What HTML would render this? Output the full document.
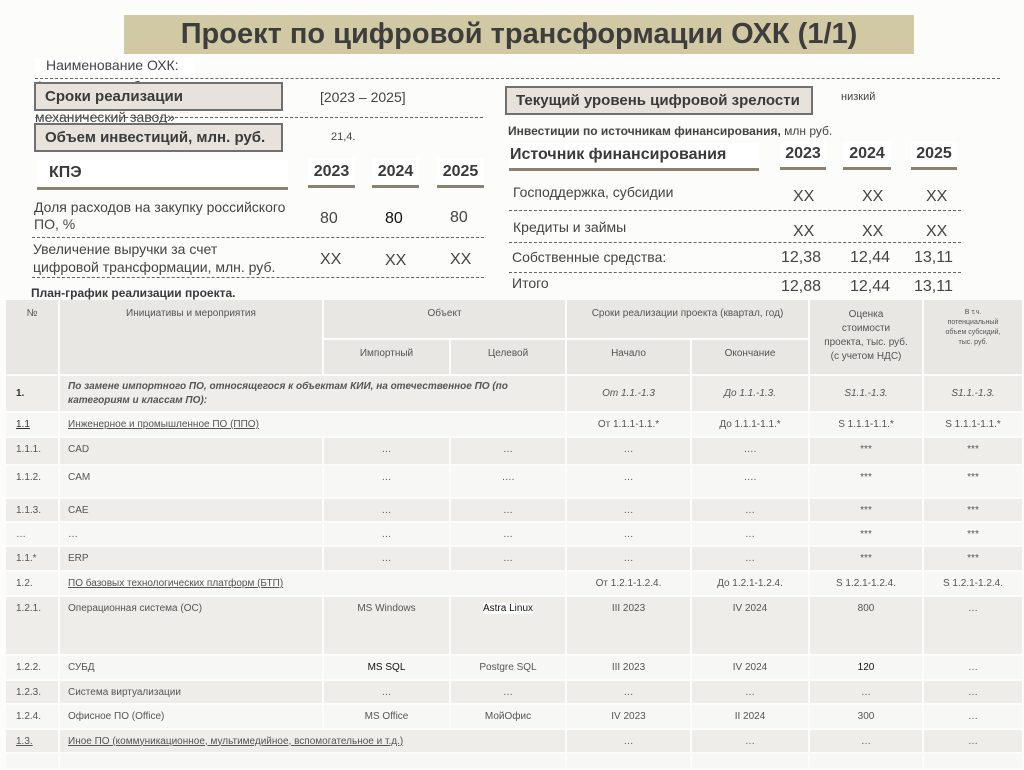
<!DOCTYPE html>
<html><head><meta charset="utf-8">
<style>
*{margin:0;padding:0;box-sizing:border-box}
body{width:1024px;height:767px;background:#fcfcfb;position:relative;overflow:hidden;font-family:"Liberation Sans","DejaVu Sans",sans-serif;color:#444}
.a{position:absolute;white-space:nowrap}
.title{left:124px;top:15px;width:790px;height:39px;background:#d1c9a4;font-weight:bold;font-size:29px;color:#3d3d3d;text-align:center;line-height:39px}
.box{background:#e7e3dc;border:2px solid #707070;font-weight:bold;font-size:15px;color:#3a3a3a;padding-left:9px}
.dash{border-top:1px dashed #666;height:0}
.hd{font-weight:bold;font-size:16px;color:#3a3a3a;border-bottom:3px solid #8a8170;text-align:center;background:#fff}
.t{font-size:14px;color:#444}
.v{font-size:16px;color:#444}
table{position:absolute;left:4px;top:298px;border-collapse:separate;border-spacing:2px;font-family:"Liberation Sans Narrow","Liberation Sans",sans-serif;font-size:10px;color:#555;table-layout:fixed}
td{vertical-align:middle;text-align:center;padding:0 2px;overflow:hidden;white-space:nowrap}
td.l{text-align:left;padding-left:8px}
td.n{text-align:left;padding-left:10px}
tr.h td{background:#e8e7e3;vertical-align:top;padding-top:8px}
tr.g td{background:#eeede9}
tr.w td{background:#f7f7f5}
.u{text-decoration:underline}
.tp td{vertical-align:top;padding-top:6px}
</style></head><body>
<div class="a title">Проект по цифровой трансформации ОХК (1/1)</div>

<div class="a" style="left:35px;top:58px;width:160px;height:16px;background:#fff"></div>
<div class="a" style="left:46px;top:57px;font-size:14px;color:#444">Наименование ОХК:</div>
<div class="a dash" style="left:35px;top:78px;width:965px"></div>
<div class="a" style="left:35px;top:78px;font-size:14px;color:#444;height:6px;overflow:hidden">Акционерное общество</div>
<div class="a" style="left:35px;top:109px;font-size:14px;color:#444">механический завод»</div>
<div class="a dash" style="left:35px;top:117px;width:448px"></div>
<div class="a box" style="left:34px;top:82px;width:249px;height:29px;line-height:25px">Сроки реализации</div>
<div class="a" style="left:320px;top:89px;font-size:14px;color:#444">[2023 – 2025]</div>
<div class="a box" style="left:34px;top:123px;width:249px;height:29px;line-height:25px">Объем инвестиций, млн. руб.</div>
<div class="a" style="left:331px;top:131px;font-size:11px;color:#444">21,4.</div>

<div class="a hd" style="left:37px;top:160px;width:251px;height:30px;line-height:26px;text-align:left;padding-left:12px">КПЭ</div>
<div class="a hd" style="left:308px;top:158px;width:47px;height:30px;line-height:28px">2023</div>
<div class="a hd" style="left:372px;top:158px;width:47px;height:30px;line-height:28px">2024</div>
<div class="a hd" style="left:437px;top:158px;width:47px;height:30px;line-height:28px">2025</div>

<div class="a t" style="left:34px;top:199px;line-height:17px">Доля расходов на закупку российского<br>ПО, %</div>
<div class="a v" style="left:320px;top:210px">80</div>
<div class="a v" style="left:385px;top:210px;color:#111">80</div>
<div class="a v" style="left:450px;top:209px">80</div>
<div class="a dash" style="left:32px;top:237px;width:452px"></div>
<div class="a t" style="left:33px;top:240px;line-height:18px">Увеличение выручки за счет<br>цифровой трансформации, млн. руб.</div>
<div class="a v" style="left:320px;top:251px">XX</div>
<div class="a v" style="left:385px;top:252px">XX</div>
<div class="a v" style="left:450px;top:251px">XX</div>
<div class="a dash" style="left:32px;top:277px;width:452px"></div>
<div class="a" style="left:31px;top:286px;font-size:12px;font-weight:bold;color:#3a3a3a">План-график реализации проекта.</div>

<div class="a box" style="left:505px;top:86px;width:308px;height:29px;line-height:25px">Текущий уровень цифровой зрелости</div>
<div class="a" style="left:841px;top:91px;font-size:11px;color:#444">низкий</div>
<div class="a" style="left:508px;top:124px;font-size:12px;color:#444"><b>Инвестиции по источникам финансирования,</b> млн руб.</div>
<div class="a hd" style="left:509px;top:143px;width:250px;height:28px;line-height:24px;text-align:left;padding-left:1px">Источник финансирования</div>
<div class="a hd" style="left:780px;top:141px;width:46px;height:29px;line-height:26px">2023</div>
<div class="a hd" style="left:843px;top:141px;width:48px;height:29px;line-height:26px">2024</div>
<div class="a hd" style="left:911px;top:141px;width:46px;height:29px;line-height:26px">2025</div>
<div class="a t" style="left:513px;top:184px">Господдержка, субсидии</div>
<div class="a v" style="left:793px;top:188px">XX</div><div class="a v" style="left:862px;top:188px">XX</div><div class="a v" style="left:926px;top:188px">XX</div>
<div class="a dash" style="left:509px;top:210px;width:452px"></div>
<div class="a t" style="left:513px;top:219px">Кредиты и займы</div>
<div class="a v" style="left:793px;top:223px">XX</div><div class="a v" style="left:862px;top:223px">XX</div><div class="a v" style="left:926px;top:223px">XX</div>
<div class="a dash" style="left:509px;top:242px;width:452px"></div>
<div class="a t" style="left:512px;top:249px">Собственные средства:</div>
<div class="a v" style="left:781px;top:249px">12,38</div><div class="a v" style="left:850px;top:249px">12,44</div><div class="a v" style="left:914px;top:249px">13,11</div>
<div class="a dash" style="left:509px;top:272px;width:452px"></div>
<div class="a t" style="left:512px;top:275px">Итого</div>
<div class="a v" style="left:781px;top:278px">12,88</div><div class="a v" style="left:850px;top:278px">12,44</div><div class="a v" style="left:914px;top:278px">13,11</div>

<table>
<colgroup><col style="width:52px"><col style="width:262px"><col style="width:125px"><col style="width:114px"><col style="width:123px"><col style="width:116px"><col style="width:112px"><col style="width:98px"></colgroup>
<tr class="h" style="height:38px"><td rowspan="2">№</td><td rowspan="2">Инициативы и мероприятия</td><td colspan="2">Объект</td><td colspan="2">Сроки реализации проекта (квартал, год)</td><td rowspan="2" style="line-height:14px">Оценка<br>стоимости<br>проекта, тыс. руб.<br>(с учетом НДС)</td><td rowspan="2" style="font-size:7px;line-height:10px">В т.ч.<br>потенциальный<br>объем субсидий,<br>тыс. руб.</td></tr>
<tr class="h" style="height:34px"><td>Импортный</td><td>Целевой</td><td>Начало</td><td>Окончание</td></tr>
<tr class="g" style="height:35px"><td class="n" style="font-weight:bold;color:#333">1.</td><td colspan="3" class="l" style="font-style:italic;font-weight:bold;white-space:normal;line-height:14px">По замене импортного ПО, относящегося к объектам КИИ, на отечественное ПО (по категориям и классам ПО):</td><td><i>От 1.1.-1.3</i></td><td><i>До 1.1.-1.3.</i></td><td><i>S1.1.-1.3.</i></td><td><i>S1.1.-1.3.</i></td></tr>
<tr class="w" style="height:23px"><td class="n u" style="color:#333">1.1</td><td colspan="3" class="l u">Инженерное и промышленное ПО (ППО)</td><td>От 1.1.1-1.1.*</td><td>До 1.1.1-1.1.*</td><td>S 1.1.1-1.1.*</td><td>S 1.1.1-1.1.*</td></tr>
<tr class="g tp" style="height:26px"><td class="n">1.1.1.</td><td class="l">CAD</td><td>…</td><td>…</td><td>…</td><td>….</td><td>***</td><td>***</td></tr>
<tr class="w tp" style="height:31px"><td class="n">1.1.2.</td><td class="l">CAM</td><td>…</td><td>….</td><td>…</td><td>….</td><td>***</td><td>***</td></tr>
<tr class="g tp" style="height:22px"><td class="n">1.1.3.</td><td class="l">CAE</td><td>…</td><td>…</td><td>…</td><td>…</td><td>***</td><td>***</td></tr>
<tr class="w" style="height:22px"><td class="n">…</td><td class="l">…</td><td>…</td><td>…</td><td>…</td><td>…</td><td>***</td><td>***</td></tr>
<tr class="g" style="height:23px"><td class="n">1.1.*</td><td class="l">ERP</td><td>…</td><td>…</td><td>…</td><td>…</td><td>***</td><td>***</td></tr>
<tr class="w" style="height:23px"><td class="n">1.2.</td><td colspan="3" class="l u">ПО базовых технологических платформ (БТП)</td><td>От 1.2.1-1.2.4.</td><td>До 1.2.1-1.2.4.</td><td>S 1.2.1-1.2.4.</td><td>S 1.2.1-1.2.4.</td></tr>
<tr class="g tp" style="height:57px"><td class="n">1.2.1.</td><td class="l">Операционная система (ОС)</td><td>MS Windows</td><td><span style="background:#fff;color:#111">Astra Linux</span></td><td>III 2023</td><td>IV 2024</td><td>800</td><td>…</td></tr>
<tr class="w" style="height:23px"><td class="n">1.2.2.</td><td class="l">СУБД</td><td style="color:#111">MS SQL</td><td>Postgre SQL</td><td>III 2023</td><td>IV 2024</td><td style="color:#111">120</td><td>…</td></tr>
<tr class="g" style="height:22px"><td class="n">1.2.3.</td><td class="l">Система виртуализации</td><td>…</td><td>…</td><td>…</td><td>…</td><td>…</td><td>…</td></tr>
<tr class="w" style="height:23px"><td class="n">1.2.4.</td><td class="l">Офисное ПО (Office)</td><td>MS Office</td><td>МойОфис</td><td>IV 2023</td><td>II 2024</td><td>300</td><td>…</td></tr>
<tr class="g" style="height:22px"><td class="n u">1.3.</td><td colspan="3" class="l u">Иное ПО (коммуникационное, мультимедийное, вспомогательное и т.д.)</td><td>…</td><td>…</td><td>…</td><td>…</td></tr>
<tr class="w" style="height:14px"><td></td><td colspan="3"></td><td></td><td></td><td></td><td></td></tr>
</table>
</body></html>
